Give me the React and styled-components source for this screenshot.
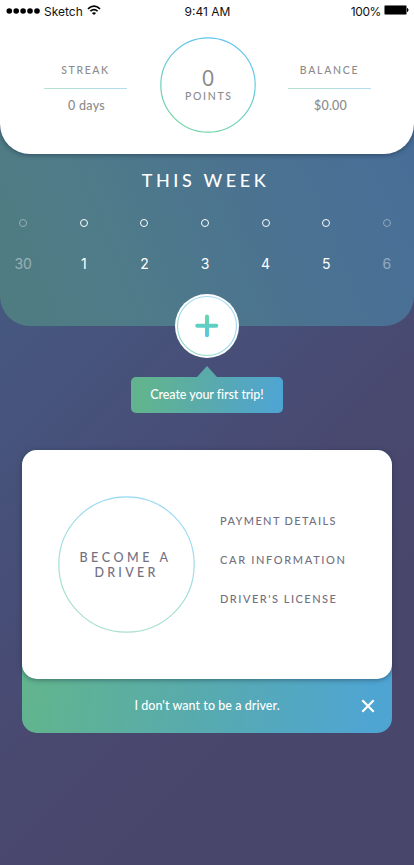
import React from "react";
import styled, { createGlobalStyle } from "styled-components";

const GlobalStyle = createGlobalStyle`
  * { box-sizing: border-box; }
  body { margin: 0; }
`;

const Screen = styled.main`
  width: 414px;
  height: 865px;
  overflow: hidden;
  display: flex;
  flex-direction: column;
  align-items: center;
  font-family: Lato, sans-serif;
  background: linear-gradient(135deg, #46618d 0%, #46577f 26%, #474e77 48%, #494970 60%, #49466b 76%);
`;

const Label = styled.span`
  display: block;
  white-space: nowrap;
  font-size: ${(p) => p.$size}px;
  line-height: ${(p) => p.$line || 16}px;
  letter-spacing: ${(p) => p.$track || 0}px;
  margin-right: ${(p) => (p.$trail ?? -(p.$track || 0))}px;
  color: ${(p) => p.$color || "#8b8b8c"};
  font-weight: ${(p) => p.$weight || 400};
`;

const PointCount = styled.strong`
  font: 500 22px/22px "Open Sans", sans-serif;
  color: #88888a;
`;

const Header = styled.header`
  position: relative;
  z-index: 2;
  flex: none;
  width: 100%;
  height: 154px;
  background: #fff;
  border-radius: 0 0 30px 30px;
  box-shadow: 0 1px 5px rgba(20, 35, 60, 0.5);
`;

const StatusBar = styled.div`
  height: 24px;
  padding: 0 5px 0 6px;
  display: grid;
  grid-template-columns: 1fr auto 1fr;
  align-items: center;
  font: 12px/24px Inter, sans-serif;
  color: #111;
`;

const StatusGroup = styled.div`
  display: flex;
  align-items: center;
  justify-content: ${(p) => (p.$end ? "flex-end" : "flex-start")};
  gap: ${(p) => (p.$end ? 3 : 4)}px;
  letter-spacing: ${(p) => (p.$end ? -0.4 : 0)}px;
`;

const Stats = styled.div`
  display: grid;
  grid-template-columns: 83px 95px 83px;
  column-gap: 33px;
  padding: 13px 0 0 44px;
`;

const Stat = styled.div`
  display: flex;
  flex-direction: column;
  align-items: center;
  padding-top: 25px;
`;

const Rule = styled.hr`
  width: 100%;
  height: 1px;
  border: 0;
  margin: 10px 0 9px;
  background: linear-gradient(90deg, #b5e0cf, #b3dcf0);
`;

const Circle = styled.div`
  display: grid;
  place-items: center;
  width: ${(p) => p.$size}px;
  height: ${(p) => p.$size}px;
  flex: none;
  > * { grid-area: 1 / 1; }
`;

const CircleText = styled.div`
  display: flex;
  flex-direction: column;
  align-items: center;
`;

const Week = styled.section`
  position: relative;
  flex: none;
  width: 100%;
  height: 195px;
  margin-top: -23px;
  padding-top: 37px;
  display: flex;
  flex-direction: column;
  align-items: center;
  border-radius: 0 0 30px 30px;
  background: linear-gradient(68deg, #4f7c80 0%, #4f7c88 25%, #4b7390 60%, #486e98 100%);
`;

const Days = styled.div`
  display: grid;
  grid-template-columns: repeat(7, 60.6px);
  justify-content: center;
  width: 424px;
  margin: 27px 4px 0 0;
`;

const Day = styled.div`
  display: flex;
  flex-direction: column;
  align-items: center;
  gap: 27px;
  opacity: ${(p) => (p.$muted ? 0.4 : 1)};
  font: 14px/20px Inter, sans-serif;
  color: #fff;
`;

const Dot = styled.i`
  width: 8px;
  height: 8px;
  border: 1.3px solid #fff;
  border-radius: 50%;
`;

const AddButton = styled.button`
  position: relative;
  z-index: 1;
  flex: none;
  display: block;
  width: 64px;
  height: 64px;
  margin-top: -32px;
  padding: 0;
  border: 0;
  border-radius: 50%;
  background: #fff;
  svg { display: block; }
`;

const Tip = styled.div`
  flex: none;
  width: 152px;
  margin-top: 8px;
  display: flex;
  flex-direction: column;
  align-items: center;
`;

const TipArrow = styled.i`
  width: 20px;
  height: 11px;
  background: #59aaa9;
  clip-path: polygon(50% 0, 100% 100%, 0 100%);
`;

const TipBody = styled.div`
  width: 100%;
  height: 36px;
  display: flex;
  align-items: center;
  justify-content: center;
  border-radius: 5px;
  background: linear-gradient(100deg, #61b48f 10%, #58a9b0 55%, #4fa5d2 95%);
`;

const DriverCard = styled.section`
  flex: none;
  width: 370px;
  height: 283px;
  margin-top: 37px;
  border-radius: 15px;
  background: linear-gradient(98deg, #61b48f 12%, #58abac 50%, #4fa5d2 94%);
`;

const DriverPanel = styled.div`
  display: flex;
  height: 229px;
  padding: 46px 0 0 36px;
  border-radius: 15px;
  background: #fff;
  box-shadow: 0 1px 5px rgba(25, 45, 65, 0.5);
`;

const DriverList = styled.div`
  display: flex;
  flex-direction: column;
  align-items: flex-start;
  gap: 23px;
  padding: 17px 0 0 25px;
`;

const Dismiss = styled.div`
  height: 54px;
  padding: 0 17px;
  display: grid;
  grid-template-columns: 14px 1fr 14px;
  align-items: center;
  justify-items: center;
  > :first-child { grid-column: 2; }
  svg { display: block; }
`;

function Ring({ id, size, from, to }) {
  return (
    <svg width={size} height={size}>
      <defs>
        <linearGradient id={id} x1="0.3" y1="1" x2="0.7" y2="0">
          <stop offset="0.05" stopColor={from} />
          <stop offset="0.9" stopColor={to} />
        </linearGradient>
      </defs>
      <circle cx={size / 2} cy={size / 2} r={size / 2 - 0.8} fill="none" stroke={`url(#${id})`} strokeWidth="1.2" />
    </svg>
  );
}

const days = [30, 1, 2, 3, 4, 5, 6];
const ink = "#737082";
const steps = [
  { name: "PAYMENT DETAILS", track: 1.35 },
  { name: "CAR INFORMATION", track: 1.65 },
  { name: "DRIVER'S LICENSE", track: 1.5 },
];

export default function App() {
  return (
    <Screen>
      <GlobalStyle />
      <Header>
        <StatusBar>
          <StatusGroup>
            <svg width="34" height="8" fill="#000">
              {[3.3, 10.2, 17.1, 24, 31].map((x) => <circle key={x} cx={x} cy="3" r="2.8" />)}
            </svg>
            <span>Sketch</span>
            <svg width="14" height="14" viewBox="0 0 14 14" fill="none" stroke="#000" strokeWidth="1.7">
              <path d="M1 3.8 Q7-1.6 13 3.8M3.4 6.2Q7 3 10.6 6.2" />
              <path d="M7 10 4.9 7.9Q7 6.4 9.1 7.9Z" fill="#000" stroke="none" />
            </svg>
          </StatusGroup>
          <span>9:41 AM</span>
          <StatusGroup $end>
            <span>100%</span>
            <svg width="25" height="14">
              <rect x="0.5" y="0.5" width="22" height="9" rx="1.2" fill="#000" stroke="#777" />
              <path d="M23.5 3.5q1.2 1.5 0 3z" fill="#000" stroke="#000" />
            </svg>
          </StatusGroup>
        </StatusBar>
        <Stats>
          <Stat>
            <Label $size={10.5} $track={1.6} $trail={0} $weight={500}>STREAK</Label>
            <Rule />
            <Label $size={12.5} $track={0.3} $trail={-2} $weight={500}>0 days</Label>
          </Stat>
          <Circle $size={95}>
            <Ring id="points" size={96} from="#73d4a6" to="#62c4ee" />
            <CircleText>
              <PointCount>0</PointCount>
              <Label $size={10.5} $track={1.7} $weight={500}>POINTS</Label>
            </CircleText>
          </Circle>
          <Stat>
            <Label $size={10.5} $track={1.7} $trail={0} $weight={500}>BALANCE</Label>
            <Rule />
            <Label $size={12.5} $track={0.2} $trail={-2} $weight={500}>$0.00</Label>
          </Stat>
        </Stats>
      </Header>

      <Week>
        <Label $size={18} $line={24} $track={3.6} $color="#fff" $trail={3} $weight={500}>THIS WEEK</Label>
        <Days>
          {days.map((day, i) => (
            <Day key={day} $muted={i === 0 || i === 6}>
              <Dot />
              <span>{day}</span>
            </Day>
          ))}
        </Days>
      </Week>

      <AddButton aria-label="Create trip">
        <svg width="64" height="64">
          <defs>
            <linearGradient id="addRing" x1="0" y1="1" x2="1" y2="0">
              <stop offset="0.1" stopColor="#8edbc4" />
              <stop offset="0.8" stopColor="#a5d8fa" />
            </linearGradient>
            <linearGradient id="addPlus" gradientUnits="userSpaceOnUse" x1="32" y1="20" x2="32" y2="44">
              <stop offset="0" stopColor="#6ad6a2" />
              <stop offset="1" stopColor="#55c8e6" />
            </linearGradient>
          </defs>
          <circle cx="32" cy="32" r="29.5" fill="none" stroke="url(#addRing)" strokeWidth="1.1" />
          <path d="M32 22.5V41.2M22.2 31.8H41.3" fill="none" stroke="url(#addPlus)" strokeWidth="4" strokeLinecap="round" />
        </svg>
      </AddButton>

      <Tip>
        <TipArrow />
        <TipBody>
          <Label $size={12.5} $track={-0.07} $color="#fff" $weight={500}>Create your first trip!</Label>
        </TipBody>
      </Tip>

      <DriverCard>
        <DriverPanel>
          <Circle $size={137}>
            <Ring id="driver" size={137} from="#a8e1c9" to="#9bdaf5" />
            <CircleText>
              <Label $size={12.5} $line={15} $track={3.6} $color={ink} $trail={2} $weight={500}>BECOME A</Label>
              <Label $size={12.5} $line={15} $track={3.25} $color={ink} $trail={0} $weight={500}>DRIVER</Label>
            </CircleText>
          </Circle>
          <DriverList>
            {steps.map((step) => (
              <Label key={step.name} $size={11} $track={step.track} $color={ink} $weight={500}>{step.name}</Label>
            ))}
          </DriverList>
        </DriverPanel>
        <Dismiss>
          <Label $size={12.5} $track={0.05} $color="#fff" $weight={500}>I don't want to be a driver.</Label>
          <svg width="14" height="14" stroke="#fff" strokeWidth="2.2">
            <path d="M1.3 1.3 12.7 12.7M12.7 1.3 1.3 12.7" />
          </svg>
        </Dismiss>
      </DriverCard>
    </Screen>
  );
}
